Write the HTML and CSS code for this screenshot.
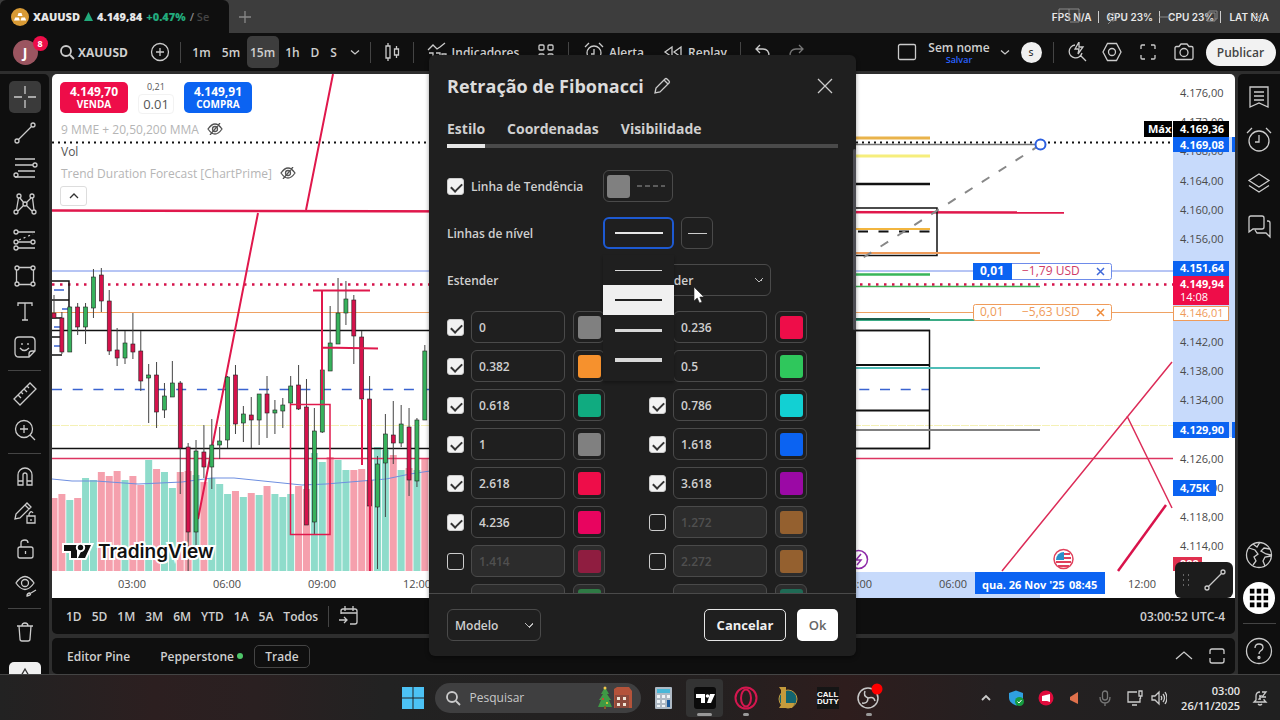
FILE: index.html
```html
<!DOCTYPE html>
<html lang="pt-BR">
<head>
    <meta charset="UTF-8">
    <meta name="viewport" content="width=device-width, initial-scale=1.0">
    <title>XAUUSD 4.149,84 +0.47%</title>
    <link rel="stylesheet" href="styles.css">
</head>
<body>
    <header class="tabstrip">
        <div class="tab">
            <svg class="gold" viewBox="0 0 18 18"><circle cx="9" cy="9" r="9" fill="#d89a35"/><path d="M6.500 8l1-3h3l1 3zM3 12.500l1.200-3h3.600l1 3zM9.500 12.500l1-3h3.500l1.200 3z" fill="#fff"/></svg>
            <strong>XAUUSD</strong>
            <svg class="up" viewBox="0 0 8 8"><path d="M4 0l4 8H0z" fill="#22ab7c"/></svg>
            <strong>4.149,84</strong>
            <strong class="gain">+0.47%</strong>
            <span class="tab-rest">/ <span>Se</span></span>
        </div>
        <button class="new-tab" aria-label="Nova aba"><svg class="ic" viewBox="0 0 14 14"><path d="M7 1v12M1 7h12"/></svg></button>
        <div class="stats">
            <span>FPS N/A</span><span>GPU 23%</span><span>CPU 23%</span><span>LAT N/A</span>
            <svg class="window-icons" viewBox="0 0 214 20"><path d="M3 5V2h20v13h-9M13 2v12M3 5v4M55 14l-3 3M103 10h12M151 6h8v8h-8zM153 6V4h8v8h-2M197 5l10 10M207 5l-10 10"/><circle cx="57" cy="10" r="4"/></svg>
        </div>
    </header>

    <nav class="topbar">
        <div class="tools-left">
            <div class="avatar">J<span class="badge">8</span></div>
            <button class="symbol"><svg class="ic bold" viewBox="0 0 16 16"><circle cx="7" cy="7" r="5"/><path d="M11 11l4 4"/></svg>XAUUSD</button>
            <button aria-label="Comparar"><svg class="ic" viewBox="0 0 20 20"><circle cx="10" cy="10" r="8.500"/><path d="M10 6v8M6 10h8"/></svg></button>
            <i></i>
            <button>1m</button>
            <button>5m</button>
            <button class="on">15m</button>
            <button>1h</button>
            <button>D</button>
            <button>S</button>
            <button aria-label="Mais intervalos"><svg class="ic tiny" viewBox="0 0 10 10"><path d="M1 3.500l4 3.500 4-3.500"/></svg></button>
            <i></i>
            <button aria-label="Velas"><svg class="ic" viewBox="0 0 20 20"><path d="M4 4h4v12H4zM6 1v3M6 16v3M12.500 7h4v6h-4zM14.500 4v3M14.500 13v3"/></svg></button>
            <i></i>
            <button><svg class="ic" viewBox="0 0 20 20"><path d="M1 8l5-5 4 4 3-2 5-4M2 11h4v7M9 11h4v7M15 18v-6h4v6"/></svg>Indicadores</button>
            <button aria-label="Modelos"><svg class="ic" viewBox="0 0 20 20"><rect x="3" y="3" width="5" height="5" rx="1"/><rect x="12" y="3" width="5" height="5" rx="1"/><rect x="3" y="12" width="5" height="5" rx="1"/><rect x="12" y="12" width="5" height="5" rx="1"/></svg></button>
            <i></i>
            <button><svg class="ic" viewBox="0 0 20 20"><circle cx="10" cy="11" r="7"/><path d="M10 7v5H7M1 5l4-4M19 5l-4-4"/></svg>Alerta</button>
            <button><svg class="ic" viewBox="0 0 20 20"><path d="M9 5v10l-7-5zM18 5v10l-7-5z"/></svg>Replay</button>
            <i></i>
            <button aria-label="Desfazer"><svg class="ic" viewBox="0 0 20 20"><path d="M8 3L4 7l4 4M4 7h7q6 0 6 7"/></svg></button>
            <button aria-label="Refazer"><svg class="ic dim" viewBox="0 0 20 20"><path d="M12 3l4 4-4 4M16 7H9q-6 0-6 7"/></svg></button>
        </div>
        <div class="tools-right">
            <button aria-label="Layout"><svg class="ic" viewBox="0 0 20 20"><rect x="1.500" y="2.500" width="17" height="15" rx="1.500"/></svg></button>
            <button class="layout-name">Sem nome<small>Salvar</small></button>
            <button aria-label="Layouts"><svg class="ic tiny" viewBox="0 0 10 10"><path d="M1 3.500l4 3.500 4-3.500"/></svg></button>
            <span class="user-s">S</span>
            <i></i>
            <button aria-label="Busca rápida"><svg class="ic" viewBox="0 0 20 20"><path d="M8 3a6.500 6.500 0 1 0 7 8M13 13l6 6M12 0l-4 7h4l-1 5 5-7h-4z"/></svg></button>
            <button aria-label="Configurações"><svg class="ic" viewBox="0 0 20 20"><path d="M5.500 1.500h9L19 10l-4.500 8.500h-9L1 10z"/><circle cx="10" cy="10" r="3.500"/></svg></button>
            <button aria-label="Tela cheia"><svg class="ic" viewBox="0 0 20 20"><path d="M3 7V4q0-1 1-1h3M13 3h3q1 0 1 1v3M17 13v3q0 1-1 1h-3M7 17H4q-1 0-1-1v-3"/></svg></button>
            <button aria-label="Foto"><svg class="ic" viewBox="0 0 20 20"><path d="M1 6q0-1.500 1.500-1.500H5L7 2h6l2 2.500h2.500Q19 4.500 19 6v10q0 1.500-1.500 1.500h-15Q1 17.500 1 16z"/><circle cx="10" cy="10.500" r="4"/></svg></button>
            <button class="publish">Publicar</button>
        </div>
    </nav>

    <main class="workspace">
        <aside class="rail rail-left">
            <div class="group group-draw">
                <button class="on" aria-label="Cursor"><svg class="ic" viewBox="0 0 28 28"><path d="M14 3v8M14 17v8M3 14h8M17 14h8"/></svg></button>
                <button aria-label="Linha"><svg class="ic" viewBox="0 0 28 28"><circle cx="6" cy="22" r="2"/><circle cx="22" cy="6" r="2"/><path d="M7.500 20.500l13-13"/></svg></button>
                <button aria-label="Fibonacci"><svg class="ic" viewBox="0 0 28 28"><path d="M4 5h20M4 11h18M7 17h17M4 23h20"/><circle cx="24" cy="11" r="2"/><circle cx="5" cy="21" r="2"/></svg></button>
                <button aria-label="Padrões"><svg class="ic" viewBox="0 0 28 28"><circle cx="8" cy="6" r="2"/><circle cx="21" cy="6" r="2"/><circle cx="14" cy="14" r="2"/><circle cx="5" cy="22" r="2"/><circle cx="23" cy="22" r="2"/><path d="M7.500 8L5.500 20M9 8l4 5M20 8l-5 5M21.500 8l1.500 12M7 21l6-6M15 15l6 6"/></svg></button>
                <button aria-label="Projeção"><svg class="ic" viewBox="0 0 28 28"><circle cx="5" cy="6" r="2"/><circle cx="5" cy="16" r="2"/><circle cx="22" cy="16" r="2"/><circle cx="5" cy="22" r="2"/><path d="M7 6h17M7 16h13M7 22h17"/><path d="M8 14L22 8" stroke-dasharray="2 3"/></svg></button>
                <button aria-label="Formas"><svg class="ic" viewBox="0 0 28 28"><circle cx="6" cy="6" r="2"/><circle cx="22" cy="6" r="2"/><circle cx="6" cy="22" r="2"/><circle cx="22" cy="22" r="2"/><path d="M8 5.500h12M8 22.500h12M5.500 8v12M22.500 8v12"/></svg></button>
                <button aria-label="Texto"><svg class="ic" viewBox="0 0 28 28"><path d="M7 9V6h14v3M14 6v17M11 23h6"/></svg></button>
                <button aria-label="Ícones"><svg class="ic" viewBox="0 0 28 28"><path d="M8 4h12q4 0 4 4v10l-6 6H8q-4 0-4-4V8q0-4 4-4zM24 18h-3q-3 0-3 3v3M9 15q4 5 9 0M11 10v2M17 10v2"/></svg></button>
            </div>
            <hr>
            <div class="group group-measure">
                <button aria-label="Régua"><svg class="ic" viewBox="0 0 28 28"><path d="M3 19L19 3l6 6L9 25zM7 15l3 3M10 12l2 2M13 9l3 3M16 6l2 2"/></svg></button>
                <button aria-label="Zoom"><svg class="ic" viewBox="0 0 28 28"><circle cx="13" cy="13" r="8.500"/><path d="M19 19l5 5M13 9v8M9 13h8"/></svg></button>
            </div>
            <hr>
            <div class="group group-lock">
                <button aria-label="Ímã"><svg class="ic" viewBox="0 0 28 28"><path d="M7 22V12a7 7 0 0 1 14 0v10h-5V12a2 2 0 0 0-4 0v10zM7 18h5M16 18h5"/></svg></button>
                <button aria-label="Manter desenho"><svg class="ic" viewBox="0 0 28 28"><path d="M4 20l1-5L16 4l4 4L9 19zM14 6l4 4M16 17h8v7h-8zM18 17v-2q2-4 4-1M20 20v2"/></svg></button>
                <button aria-label="Travar"><svg class="ic" viewBox="0 0 28 28"><rect x="7" y="12" width="15" height="11" rx="2"/><path d="M10 12V8q0-3 4-3 3 0 3 3M14.500 16v3"/></svg></button>
                <button aria-label="Ocultar"><svg class="ic" viewBox="0 0 28 28"><path d="M5 12q9-13 18 0-9 13-18 0z"/><circle cx="14" cy="12" r="3.500"/><path d="M25 19l-5 3M16 25q0-3 3-3 2 2-3 3z"/></svg></button>
            </div>
            <hr>
            <button aria-label="Excluir"><svg class="ic" viewBox="0 0 28 28"><path d="M6 8h16M11 8q0-3 3-3t3 3M8 8l1 13q0 2 2 2h6q2 0 2-2l1-13"/></svg></button>
            <button class="more" aria-label="Mais"><svg class="ic" viewBox="0 0 28 28"><path d="M14 5l-4 7h8z"/></svg></button>
        </aside>

        <div class="center">
            <section class="chart">
                <svg id="chart" viewBox="52 74 1183 524" preserveAspectRatio="xMinYMin slice">
                    <g class="axis-bands">
                        <rect x="1173" y="137" width="62" height="300"/>
                        <rect x="850" y="572" width="190" height="26"/>
                    </g>
                    <g id="volume"></g>
                    <path d="M52 479l20 2 24 0 42 3 44-2 30-4 22 0 68 7 24-1 36-3 24-2 24-5 40-6" class="ma"/>
                    <g class="lines">
                        <path d="M52 142.500H1173" stroke="#111" stroke-width="2" stroke-dasharray="2 4"/>
                        <path d="M52 210.500l1012 2" stroke="#e0184c" stroke-width="2.500"/>
                        <path d="M52 271H1173" stroke="#6e8bea"/>
                        <path d="M52 284.500H1173" stroke="#d5124b" stroke-width="2.500" stroke-dasharray="2.500 5.500"/>
                        <path d="M52 312.500H1173" stroke="#efa263"/>
                        <path d="M52 330.500H930" stroke="#111" stroke-width="1.500"/>
                        <path d="M52 389.500H930" stroke="#3a63d0" stroke-width="1.500" stroke-dasharray="10 10.700"/>
                        <path d="M52 425.500H1173" stroke="#f5f1b5" stroke-dasharray="8 1"/>
                        <path d="M52 448.500H930" stroke="#111" stroke-width="1.500"/>
                        <path d="M52 458.500H1173" stroke="#dc3460" stroke-width="1.500"/>
                        <path d="M333 74l-27 136M258 213L198 519" stroke="#e0184c" stroke-width="2"/>
                    </g>
                    <g fill="none" stroke="#111" stroke-width="1.500">
                        <path d="M52 281h17v50M52 300h17M52 318h10M52 337h10M52 355h10"/>
                        <path d="M54 290h10M62 309h6M54 327h7M54 346h7" stroke="#3a63d0"/>
                    </g>
                    <g id="candles"></g>
                    <g fill="none" stroke="#e0184c" stroke-width="2">
                        <path d="M313 290.500h57M322 290v110M322 347.500l56 1M362 400v65M370 400v171"/>
                        <rect x="290.500" y="404.500" width="39.500" height="130" stroke-width="1.500"/>
                    </g>
                    <g fill="none" stroke-width="2">
                        <path d="M850 138h80" stroke="#e9b34b" stroke-width="3"/>
                        <path d="M850 144.500h190" stroke="#777" stroke-width="1.500"/>
                        <path d="M850 156h80" stroke="#f6ee7c" stroke-width="3"/>
                        <path d="M850 184h80" stroke="#111" stroke-width="2.500"/>
                        <path d="M850 208h87v47.500h-87" stroke="#111" stroke-width="1.500"/>
                        <path d="M850 229h80" stroke="#f2b53f"/>
                        <path d="M858 231.500h72" stroke="#111" stroke-dasharray="10 10.500"/>
                        <path d="M850 253h190" stroke="#ef9b5a"/>
                        <path d="M850 274.500h80" stroke="#38b558" stroke-width="2.500"/>
                        <path d="M850 286.500h190" stroke="#3fae55" stroke-width="1.500"/>
                        <path d="M850 320h190" stroke="#3aab85"/>
                        <path d="M850 319h80" stroke="#1c5d4b"/>
                        <path d="M850 330.500h79.500v118H850" stroke="#111" stroke-width="1.500"/>
                        <path d="M850 365h80M850 410.500h80" stroke="#111"/>
                        <path d="M850 368h190" stroke="#4fbdb7"/>
                        <path d="M850 430h190" stroke="#808080"/>
                        <path d="M1040 145L850 266" stroke="#888" stroke-dasharray="9 11"/>
                        <path d="M1172 362l-170 209M1127 416l45 92" stroke="#dc2c58" stroke-width="1.500"/>
                        <path d="M1166 505l-48 66" stroke="#d9134b" stroke-width="2.500"/>
                        <circle cx="1040.500" cy="144.500" r="5" fill="#fff" stroke="#2b5fe0"/>
                    </g>
                    <g class="order">
                        <rect x="973.500" y="263.500" width="138" height="16" rx="2" fill="#fff" stroke="#6e8bea"/>
                        <path d="M973 263h39v17h-39z" fill="#0b63f2"/>
                        <text x="980" y="275" fill="#fff" font-weight="700">0,01</text>
                        <text x="1022" y="275" fill="#cf3a67">−1,79 USD</text>
                        <path d="M1097 268l7 7M1104 268l-7 7" stroke="#3f68d8" stroke-width="1.500"/>
                        <rect x="973.500" y="304.500" width="138" height="16" rx="2" fill="#fff" stroke="#ef9b5a"/>
                        <text x="980" y="316" fill="#ef9b5a">0,01</text>
                        <text x="1022" y="316" fill="#ef9b5a">−5,63 USD</text>
                        <path d="M1097 309l7 7M1104 309l-7 7" stroke="#ef8b3a" stroke-width="1.500"/>
                    </g>
                    <g class="prices" id="prices"></g>
                    <g class="tags">
                        <path d="M1144 121h28v16h-28z" fill="#000"/><text x="1148" y="133">Máx</text>
                        <path d="M1173 121h56v16h-56z" fill="#000"/><text x="1180" y="133">4.169,36</text>
                        <path d="M1173 137h56v15h-56zM1232 137h3v15h-3z" fill="#0b63f2"/><text x="1180" y="149">4.169,08</text>
                        <path d="M1173 261h56v15h-56z" fill="#0b63f2"/><text x="1180" y="272">4.151,64</text>
                        <path d="M1173 276h56v29h-56z" fill="#ee0d49"/><text x="1180" y="288">4.149,94</text><text x="1180" y="301" font-weight="400">14:08</text>
                        <rect x="1173.500" y="306.500" width="55" height="14" fill="#fff" stroke="#ef9b5a"/><text x="1180" y="317" fill="#ef9b5a" font-weight="400">4.146,01</text>
                        <path d="M1173 422h56v16h-56zM1232 422h3v16h-3z" fill="#0b63f2"/><text x="1180" y="434">4.129,90</text>
                        <path d="M1173 480h43v16h-43z" fill="#0b63f2"/><text x="1180" y="492">4,75K</text>
                        <path d="M1173 557h29v14h-29z" fill="#e0304f"/><text x="1180" y="568">888</text>
                    </g>
                    <g class="times">
                        <text x="132" y="588">03:00</text>
                        <text x="227" y="588">06:00</text>
                        <text x="322" y="588">09:00</text>
                        <text x="417" y="588">12:00</text>
                        <text x="858" y="588">03:00</text>
                        <text x="953" y="588">06:00</text>
                        <text x="1142" y="588">12:00</text>
                    </g>
                    <g class="tags">
                        <path d="M975 572h130v22H975z" fill="#0b63f2"/>
                        <text x="982" y="589">qua. 26 Nov '25</text><text x="1069" y="589">08:45</text>
                    </g>
                    <circle cx="858.500" cy="559.500" r="9" fill="#fff" stroke="#8e2ba8" stroke-width="1.500"/>
                    <path d="M861 554l-5 6h5l-4 5" fill="none" stroke="#8e2ba8" stroke-width="1.500"/>
                    <g>
                        <circle cx="1063.500" cy="559" r="9.500" fill="#fff" stroke="#e0405c" stroke-width="1.500"/>
                        <path d="M1063 554h7M1063 558h8M1056 562h15M1058 566h11" stroke="#e0405c" stroke-width="2"/>
                        <path d="M1056 560a8 8 0 0 1 8-8v8z" fill="#2b8fc9"/>
                    </g>
                    <g class="brand">
                        <path d="M64 545h13v13h-6v-7h-7zM84 545h7l-6 13h-7z"/><circle cx="80.500" cy="547.500" r="2.700"/>
                        <text x="98" y="558">TradingView</text>
                    </g>
                </svg>
                <div class="legend">
                    <div class="trade">
                        <button class="sell">4.149,70<span>VENDA</span></button>
                        <div class="spread">0,21<b>0.01</b></div>
                        <button class="buy">4.149,91<span>COMPRA</span></button>
                    </div>
                    <p class="faded">9 MME + 20,50,200 MMA <svg class="ic" viewBox="0 0 16 12"><path d="M1 6q7-10 14 0-7 10-14 0zM3 12L13 0"/><circle cx="8" cy="6" r="2.500"/></svg></p>
                    <p>Vol</p>
                    <p class="faded">Trend Duration Forecast [ChartPrime] <svg class="ic" viewBox="0 0 16 12"><path d="M1 6q7-10 14 0-7 10-14 0zM3 12L13 0"/><circle cx="8" cy="6" r="2.500"/></svg></p>
                    <button class="collapse" aria-label="Recolher"><svg class="ic" viewBox="0 0 10 10"><path d="M1 7l4-4 4 4"/></svg></button>
                </div>
                <div class="float-tool">
                    <svg viewBox="0 0 10 14" class="grip"><path d="M2 2h1M7 2h1M2 7h1M7 7h1M2 12h1M7 12h1"/></svg>
                    <svg class="ic" viewBox="0 0 28 28"><circle cx="6" cy="22" r="2"/><circle cx="22" cy="6" r="2"/><path d="M7.500 20.500l13-13"/></svg>
                </div>
            </section>
            <div class="ranges">
                <button>1D</button><button>5D</button><button>1M</button><button>3M</button><button>6M</button><button>YTD</button><button>1A</button><button>5A</button><button>Todos</button>
                <i></i>
                <button aria-label="Ir para data"><svg class="ic" viewBox="0 0 20 20"><path d="M2 8V5q0-2 2-2h12q2 0 2 2v11q0 2-2 2h-5M2 7h16M6 0v5M14 0v5M0 14h8M5 11l3 3-3 3"/></svg></button>
                <span class="clock">03:00:52 UTC-4</span>
            </div>
            <div class="panels">
                <button>Editor Pine</button>
                <button class="broker">Pepperstone<span></span></button>
                <button class="trade-btn">Trade</button>
                <div class="panel-actions">
                    <button aria-label="Abrir painel"><svg class="ic" viewBox="0 0 20 20"><path d="M2 13l8-7 8 7"/></svg></button>
                    <button aria-label="Maximizar"><svg class="ic" viewBox="0 0 20 20"><path d="M3 8V5q0-2 2-2h10q2 0 2 2v3M17 12v3q0 2-2 2H5q-2 0-2-2v-3"/></svg></button>
                </div>
            </div>
        </div>

        <aside class="rail rail-right">
            <button aria-label="Lista"><svg class="ic" viewBox="0 0 28 28"><path d="M5 4h18v20l-9-4-9 4zM9 9h10M9 13h10M9 17h10"/></svg></button>
            <button aria-label="Alertas"><svg class="ic" viewBox="0 0 28 28"><circle cx="14" cy="15" r="10"/><path d="M14 9v7h-4M2 7l5-5M26 7l-5-5"/></svg></button>
            <button aria-label="Camadas"><svg class="ic" viewBox="0 0 28 28"><path d="M14 5l10 6.500L14 18 4 11.500zM4 16.500L14 23l10-6.500"/></svg></button>
            <button aria-label="Chat"><svg class="ic" viewBox="0 0 28 28"><path d="M6 4h11q2 0 2 2v9q0 2-2 2H8l-4 3V6q0-2 2-2zM22 9h1q2 0 2 2v14l-4-4h-9l-2-3"/></svg></button>
            <button class="globe" aria-label="Mundo"><svg class="ic" viewBox="0 0 28 28"><circle cx="14" cy="14" r="12.500"/><path d="M4 7l6 2 3 4-4 3 2 4-3 4M8 3l4 3 3-5M25 8l-6-1-3 3 5 3 5 1M26 15l-6 1-2 4 2 5"/></svg></button>
            <button class="apps" aria-label="Aplicativos"><svg viewBox="0 0 28 28"><path d="M6 6h4v4H6zM12 6h4v4h-4zM18 6h4v4h-4zM6 12h4v4H6zM12 12h4v4h-4zM18 12h4v4h-4zM6 18h4v4H6zM12 18h4v4h-4zM18 18h4v4h-4z"/></svg></button>
            <hr>
            <button aria-label="Ajuda"><svg class="ic" viewBox="0 0 28 28"><circle cx="14" cy="14" r="12.500"/><path d="M10 11q0-4 4-4t4 3.500q0 2-2.500 3.500-1.500 1-1.500 3"/><circle cx="14" cy="20.500" r="1"/></svg></button>
        </aside>
    </main>

    <footer class="taskbar">
        <div class="apps-row">
            <svg class="app" viewBox="0 0 24 24"><path d="M1 1h10.500v10.500H1zM12.500 1H23v10.500H12.500zM1 12.500h10.500V23H1zM12.500 12.500H23V23H12.500z" fill="#4cc2f5"/></svg>
            <label class="search">
                <svg class="ic bold" viewBox="0 0 16 16"><circle cx="7" cy="7" r="5"/><path d="M11 11l4 4"/></svg>
                <input type="text" placeholder="Pesquisar">
                <svg class="xmas" viewBox="0 0 36 24"><path d="M7 1l4 7H9l4 6h-2l3 7H0l3-7H1l4-6H3z" fill="#3f9a45"/><path d="M6 20h2v3H6z" fill="#8a5a2b"/><circle cx="7" cy="2" r="1.500" fill="#f3c84b"/><circle cx="5" cy="13" r="1" fill="#e33"/><circle cx="9" cy="17" r="1" fill="#fc3"/><path d="M16 3l3-2h12l3 4v17H16z" fill="#b4533a"/><path d="M17 9h14v13H17z" fill="#8b4a3c"/><path d="M19 11h3v3h-3zM25 11h3v3h-3zM19 17h3v3h-3zM25 17h3v3h-3z" fill="#f0e5d5"/></svg>
            </label>
            <svg class="app" viewBox="0 0 24 24"><rect x="4" y="1" width="17" height="22" rx="1" fill="#aeb9c4"/><path d="M6 3h13v4H6z" fill="#49b7d8"/><path d="M6 9h3v3H6zM11 9h3v3h-3zM16 9h3v3h-3zM6 14h3v3H6zM11 14h3v3h-3zM6 19h3v2H6zM11 19h3v2h-3z" fill="#eef3f7"/><path d="M16 14h3v7h-3z" fill="#1b5a9c"/></svg>
            <div class="open current"><svg class="app" viewBox="0 0 24 24"><rect x="1" y="1" width="22" height="22" rx="3" fill="#0b0b0b"/><path d="M3 8h9v9H8v-5H3zM17 8h5l-4 9h-4z" fill="#fff"/><circle cx="14.500" cy="10" r="1.800" fill="#fff"/></svg></div>
            <div class="open"><svg class="app" viewBox="0 0 24 24" fill="none" stroke="#d4174f" stroke-width="2"><circle cx="12" cy="12" r="10.500"/><ellipse cx="12" cy="12" rx="5" ry="8.500"/></svg></div>
            <svg class="app" viewBox="0 0 24 24"><circle cx="13" cy="13" r="9" fill="#126570" stroke="#c59b3c"/><path d="M4 1h7v16h9l-3 5H4l2-3V4z" fill="#c59b3c"/></svg>
            <svg class="app" viewBox="0 0 24 24"><path d="M1 1h22v22H1z" fill="#151515"/><text x="1" y="11" class="cod">CALL</text><text x="1" y="18" class="cod">DUTY</text></svg>
            <div class="open"><svg class="app rec" viewBox="0 0 24 24"><g fill="none" stroke="#c8c8c8" stroke-width="1.500"><circle cx="11" cy="12" r="10"/><path d="M11 12q-5-2-3-7M11 12q6-2 7 3M11 12q0 6-6 5"/></g><circle cx="20" cy="3" r="5.500" fill="#f00"/></svg></div>
        </div>
        <div class="tray">
            <svg class="ic bold" viewBox="0 0 16 16"><path d="M4 10l4-4 4 4"/></svg>
            <svg viewBox="0 0 16 16"><path d="M1 3l7-2.500L15 3v5q0 5-7 7.500Q1 13 1 8z" fill="#2f9fe0"/><circle cx="11.500" cy="11.500" r="4.500" fill="#169b3f"/><path d="M9.500 11.500l1.500 1.500 2.500-3" stroke="#fff" fill="none"/></svg>
            <svg viewBox="0 0 16 16"><circle cx="8" cy="8" r="7.500" fill="#e00b3c"/><path d="M4 6l8-2v8l-3-1H4z" fill="#fff"/></svg>
            <svg viewBox="0 0 16 16"><path d="M3 7l8-5v12L3 10z" fill="#e0714c"/></svg>
            <svg class="ic dim" viewBox="0 0 16 16"><rect x="5.500" y="1" width="5" height="9" rx="2.500"/><path d="M3 7q0 6 5 6t5-6M8 13v3"/></svg>
            <svg class="ic" viewBox="0 0 16 16"><path d="M10 2H1v10h12V8M5 15h5M12 1h3v5h-3zM13.500 6v3"/></svg>
            <svg class="ic" viewBox="0 0 16 16"><path d="M1 6h3l4-4v12l-4-4H1zM10 6q1.500 2 0 4M12 4q3 4 0 8M14 2q4 6 0 12"/></svg>
            <div class="datetime">03:00<br>26/11/2025</div>
            <svg class="ic" viewBox="0 0 16 16"><path d="M8 2Q4 2 4 6v4l-2 2h12l-2-2V9M6 14q2 2 4 0M10 2h4l-4 5h4M7 6h2l-2 3h2"/></svg>
        </div>
    </footer>

    <form class="dialog" onsubmit="return false">
        <header>
            <h1>Retração de Fibonacci</h1>
            <button type="button" aria-label="Renomear"><svg class="ic" viewBox="0 0 18 18"><path d="M2 16l1-5L12 2q1-1 2 0l2 2q1 1 0 2l-9 9zM11 3l4 4"/></svg></button>
            <button type="button" class="close" aria-label="Fechar"><svg class="ic" viewBox="0 0 18 18"><path d="M2 2l14 14M16 2L2 16"/></svg></button>
        </header>
        <div class="tabs">
            <button type="button" class="on">Estilo</button><button type="button">Coordenadas</button><button type="button">Visibilidade</button>
        </div>
        <div class="body">
            <div class="row">
                <label class="name"><input type="checkbox" checked>Linha de Tendência</label>
                <button type="button" class="line-style" aria-label="Estilo da linha"><span class="sw gray"></span><svg viewBox="0 0 28 2"><path d="M0 1h28"/></svg></button>
            </div>
            <div class="row">
                <span class="name">Linhas de nível</span>
                <div class="width-wrap">
                    <button type="button" class="width-btn" aria-label="Espessura"><span></span></button>
                    <div class="menu">
                        <button type="button" aria-label="1px"><span class="w1"></span></button>
                        <button type="button" class="on" aria-label="2px"><span class="w2"></span></button>
                        <button type="button" aria-label="3px"><span class="w3"></span></button>
                        <button type="button" aria-label="4px"><span class="w4"></span></button>
                    </div>
                </div>
                <button type="button" class="dash-btn" aria-label="Tipo de linha"><span></span></button>
            </div>
            <div class="row">
                <label class="name" for="extend">Estender</label>
                <select id="extend"><option>Não estender</option></select>
            </div>
            <div class="levels">
                <div class="level"><input type="checkbox" aria-label="Nível 0" checked><input type="text" aria-label="Valor" value="0"><button type="button" aria-label="Cor"><span class="sw gray"></span></button></div>
                <div class="level"><input type="checkbox" aria-label="Nível 0.236" checked><input type="text" aria-label="Valor" value="0.236"><button type="button" aria-label="Cor"><span class="sw red"></span></button></div>
                <div class="level"><input type="checkbox" aria-label="Nível 0.382" checked><input type="text" aria-label="Valor" value="0.382"><button type="button" aria-label="Cor"><span class="sw orange"></span></button></div>
                <div class="level"><input type="checkbox" aria-label="Nível 0.5" checked><input type="text" aria-label="Valor" value="0.5"><button type="button" aria-label="Cor"><span class="sw green"></span></button></div>
                <div class="level"><input type="checkbox" aria-label="Nível 0.618" checked><input type="text" aria-label="Valor" value="0.618"><button type="button" aria-label="Cor"><span class="sw teal"></span></button></div>
                <div class="level"><input type="checkbox" aria-label="Nível 0.786" checked><input type="text" aria-label="Valor" value="0.786"><button type="button" aria-label="Cor"><span class="sw cyan"></span></button></div>
                <div class="level"><input type="checkbox" aria-label="Nível 1" checked><input type="text" aria-label="Valor" value="1"><button type="button" aria-label="Cor"><span class="sw gray"></span></button></div>
                <div class="level"><input type="checkbox" aria-label="Nível 1.618" checked><input type="text" aria-label="Valor" value="1.618"><button type="button" aria-label="Cor"><span class="sw blue"></span></button></div>
                <div class="level"><input type="checkbox" aria-label="Nível 2.618" checked><input type="text" aria-label="Valor" value="2.618"><button type="button" aria-label="Cor"><span class="sw red"></span></button></div>
                <div class="level"><input type="checkbox" aria-label="Nível 3.618" checked><input type="text" aria-label="Valor" value="3.618"><button type="button" aria-label="Cor"><span class="sw purple"></span></button></div>
                <div class="level"><input type="checkbox" aria-label="Nível 4.236" checked><input type="text" aria-label="Valor" value="4.236"><button type="button" aria-label="Cor"><span class="sw pink"></span></button></div>
                <div class="level"><input type="checkbox" aria-label="Nível 1.272"><input type="text" aria-label="Valor" value="1.272" disabled><button type="button" aria-label="Cor" disabled><span class="sw brown"></span></button></div>
                <div class="level"><input type="checkbox" aria-label="Nível 1.414"><input type="text" aria-label="Valor" value="1.414" disabled><button type="button" aria-label="Cor" disabled><span class="sw wine"></span></button></div>
                <div class="level"><input type="checkbox" aria-label="Nível 2.272"><input type="text" aria-label="Valor" value="2.272" disabled><button type="button" aria-label="Cor" disabled><span class="sw brown"></span></button></div>
                <div class="level next"><input type="text" aria-label="Valor" disabled><button type="button" aria-label="Cor" disabled><span class="sw moss"></span></button></div>
                <div class="level next"><input type="text" aria-label="Valor" disabled><button type="button" aria-label="Cor" disabled><span class="sw pine"></span></button></div>
            </div>
        </div>
        <footer>
            <select aria-label="Modelo"><option>Modelo</option></select>
            <button type="button" class="cancel">Cancelar</button>
            <button type="submit" class="ok">Ok</button>
        </footer>
    </form>
    <svg class="pointer" viewBox="0 0 12 18"><path d="M1 1v14l3.200-3 2.300 5 2.500-1-2.200-5H11z" fill="#fff" stroke="#222" stroke-width=".6"/></svg>
    <script src="script.js"></script>
</body>
</html>
```
FILE: styles.css
```css
* {
    box-sizing: border-box;
}
body {
    margin: 0;
    height: 100vh;
    overflow: hidden;
    display: flex;
    flex-direction: column;
    background: #2e2e2e;
    color: #cfcfcf;
    font-family: "Open Sans", "Noto Sans", sans-serif;
    font-size: 12px;
    font-weight: 600;
}
button, input, select {
    font: inherit;
    color: inherit;
}
button {
    display: inline-flex;
    align-items: center;
    justify-content: center;
    background: none;
    border: none;
    padding: 0;
    white-space: nowrap;
}
.ic {
    width: 20px;
    height: 20px;
    flex: none;
    fill: none;
    stroke: #cbcbcb;
    stroke-width: 1.3;
}
.ic.bold {
    width: 16px;
    height: 16px;
    stroke-width: 1.8;
}
.ic.tiny {
    width: 10px;
    height: 10px;
}
.ic.dim {
    stroke: #777;
}

/* browser tabs */
.tabstrip {
    display: flex;
    height: 33px;
    background: #3d3d3d;
}
.tab {
    width: 229px;
    display: flex;
    align-items: center;
    gap: 4px;
    padding-left: 11px;
    background: #0f0f0f;
    border-radius: 6px 6px 0 0;
    color: #e6e6e6;
    font-size: 11px;
    overflow: hidden;
    white-space: nowrap;
}
.gold {
    width: 18px;
    height: 18px;
}
.up {
    width: 9px;
    height: 9px;
}
.gain {
    color: #22ab7c;
}
.tab-rest {
    color: #888;
}
.tab-rest span {
    color: #444;
}
.new-tab {
    width: 32px;
}
.new-tab .ic {
    width: 14px;
    height: 14px;
    stroke: #888;
}
.stats {
    position: relative;
    display: flex;
    align-items: center;
    margin-left: auto;
    padding-right: 11px;
    font-family: Inter, sans-serif;
    font-size: 10px;
    color: #e8e8e8;
}
.stats span + span {
    margin-left: 6px;
    padding-left: 8px;
    border-left: 1px solid #ccc;
}
.window-icons {
    position: absolute;
    top: 7px;
    right: 10px;
    width: 214px;
    height: 20px;
    fill: none;
    stroke: #8a8a8a;
}

/* toolbar */
.topbar {
    display: flex;
    justify-content: space-between;
    height: 38px;
    background: #0f0f0f;
}
.tools-left, .tools-right {
    display: grid;
    align-items: center;
    justify-items: center;
}
.tools-left {
    grid-template-columns: 50px 95px 29px 13px 29px 30px 33px 27px 18px 19px 23px 8px 35px 8px 112px 34px 10px 82px 80px 10px 34px 36px;
}
.tools-right {
    grid-template-columns: 35px 70px 22px 30px 14px 34px 36px 36px 35px 79px;
}
.topbar i {
    width: 1px;
    height: 21px;
    background: #444;
}
.tools-left button {
    height: 32px;
    gap: 5px;
}
.tools-left .on {
    width: 32px;
    border-radius: 5px;
    background: #3d3d3d;
}
.avatar {
    position: relative;
    width: 25px;
    height: 25px;
    border-radius: 50%;
    background: #9b5560;
    color: #fff;
    font-size: 14px;
    font-weight: 700;
    line-height: 25px;
    text-align: center;
}
.badge {
    position: absolute;
    top: -4px;
    right: -10px;
    width: 15px;
    height: 15px;
    border-radius: 50%;
    background: #ee0d49;
    font-size: 9px;
    line-height: 15px;
}
.tools-left .symbol {
    justify-self: start;
    gap: 3px;
    margin-left: 9px;
    font-weight: 700;
}
.layout-name {
    flex-direction: column;
    line-height: 14px;
}
.layout-name small {
    font-size: 9px;
    line-height: 9px;
    color: #2962ff;
}
.user-s {
    width: 21px;
    height: 21px;
    border-radius: 50%;
    background: #f0f0f0;
    color: #333;
    font-size: 9px;
    line-height: 21px;
    text-align: center;
}
.publish {
    width: 70px;
    height: 27px;
    border-radius: 14px;
    background: #f2f2f2;
    color: #444;
}

/* workspace */
.workspace {
    flex: 1;
    min-height: 0;
    display: grid;
    grid-template-columns: 49px minmax(0, 1fr) 42px;
    gap: 3px;
    padding-top: 3px;
}
.rail {
    display: flex;
    flex-direction: column;
    align-items: center;
    min-height: 0;
    overflow: hidden;
    background: #0f0f0f;
}
.rail button {
    flex: none;
    width: 32px;
    height: 32px;
    border-radius: 5px;
}
.rail .ic {
    width: 28px;
    height: 28px;
}
.rail hr {
    flex: none;
    width: 33px;
    height: 1px;
    margin: 7px 0;
    border: none;
    background: #444;
}
.rail .on {
    background: #3a3a3a;
}
.rail-left {
    padding-top: 7px;
    border-radius: 0 5px 0 0;
}
.group {
    flex: none;
    display: flex;
    flex-direction: column;
    justify-content: space-between;
}
.group-draw {
    height: 282px;
}
.group-measure {
    height: 68px;
}
.group-lock {
    height: 140px;
}
.rail .more {
    margin-top: 14px;
    background: #f0f0f0;
}
.more .ic {
    stroke: #333;
}
.rail-right {
    padding-top: 7px;
    gap: 11px;
    border-radius: 5px 0 0 0;
}
.rail-right hr {
    margin: -2px 0 0;
}
.rail .globe {
    margin-top: auto;
}
.rail .apps {
    border-radius: 50%;
    background: #fff;
}
.rail-right button:last-child {
    margin-bottom: 7px;
}
.center {
    display: flex;
    flex-direction: column;
    min-height: 0;
}
.chart {
    position: relative;
    flex: 1;
    min-height: 0;
    background: #fff;
    border-radius: 5px 5px 0 0;
    overflow: hidden;
}
#chart {
    display: block;
    width: 100%;
    height: 100%;
}
.axis-bands rect {
    fill: #c7dafb;
}
.ma {
    fill: none;
    stroke: #6e8fe0;
}
.lines {
    fill: none;
    stroke-width: 1;
}
.vol-up {
    fill: #8fdccb;
}
.vol-down {
    fill: #f5a0ad;
}
.up-bar {
    fill: #37b25c;
}
.down-bar {
    fill: #d5124b;
}
.up-bar, .down-bar {
    stroke: #222;
    stroke-width: 0.6;
}
.wick {
    stroke: #444;
}
.order {
    font-size: 12px;
    font-weight: 400;
}
.prices, .times {
    fill: #4a4a4a;
    font-size: 11px;
    font-weight: 400;
}
.times {
    text-anchor: middle;
}
.tags {
    fill: #fff;
    font-size: 11px;
    font-weight: 700;
}
.brand {
    fill: #111;
    stroke: #fff;
    stroke-width: 4px;
    paint-order: stroke;
    font: 600 19px Inter, sans-serif;
}
.legend {
    position: absolute;
    top: 8px;
    left: 8px;
    color: #555;
    font-weight: 400;
}
.legend p {
    display: flex;
    align-items: center;
    gap: 8px;
    height: 22px;
    margin: 0;
    padding-left: 1px;
}
.legend .faded {
    color: #b5b5b5;
}
.legend p .ic {
    width: 16px;
    height: 12px;
    stroke: #555;
}
.trade {
    display: flex;
    gap: 10px;
    margin-bottom: 4px;
}
.sell, .buy {
    flex-direction: column;
    width: 68px;
    height: 31px;
    border-radius: 5px;
    color: #fff;
    font-weight: 700;
    line-height: 13px;
}
.sell span, .buy span {
    font-size: 10px;
}
.sell {
    background: #ee0d49;
}
.buy {
    background: #0b63f2;
}
.spread {
    width: 36px;
    font-size: 9px;
    line-height: 9px;
    text-align: center;
}
.spread b {
    display: block;
    margin-top: 3px;
    border: 1px solid #f2f2f2;
    border-radius: 4px;
    font-size: 13px;
    font-weight: 400;
    line-height: 18px;
}
.collapse {
    width: 27px;
    height: 20px;
    margin-top: 2px;
    border: 1px solid #ddd;
    border-radius: 3px;
    background: #fff;
}
.collapse .ic {
    width: 10px;
    height: 10px;
    stroke: #333;
}
.float-tool {
    position: absolute;
    right: 2px;
    bottom: 0;
    display: flex;
    align-items: center;
    gap: 10px;
    width: 58px;
    height: 36px;
    padding-left: 6px;
    border-radius: 6px;
    background: #1c1c1c;
}
.grip {
    width: 10px;
    height: 14px;
    stroke: #666;
    stroke-width: 2;
}
.float-tool .ic {
    width: 28px;
    height: 28px;
}
.ranges, .panels {
    display: flex;
    align-items: center;
    height: 36px;
    background: #0f0f0f;
    border-radius: 0 0 5px 5px;
}
.ranges {
    gap: 10px;
    padding: 0 10px 0 14px;
}
.ranges i {
    width: 1px;
    height: 21px;
    background: #444;
}
.clock {
    margin-left: auto;
}
.panels {
    margin: 4px 0 0;
    padding: 0 8px 0 15px;
    border-radius: 5px;
}
.broker {
    gap: 3px;
    margin-left: 30px;
}
.broker span {
    width: 6px;
    height: 6px;
    border-radius: 50%;
    background: #4fc66a;
}
.trade-btn {
    width: 56px;
    height: 23px;
    margin-left: 11px;
    border: 1px solid #444;
    border-radius: 5px;
}
.panel-actions {
    display: flex;
    gap: 13px;
    margin-left: auto;
}

/* system taskbar */
.taskbar {
    display: grid;
    grid-template-columns: 1fr auto 1fr;
    align-items: center;
    height: 46px;
    border-top: 1px solid #444;
    background: linear-gradient(90deg, #222 0, #2c1f20 12%, #2a2021 20%, #222 30%, #242020 56%, #2e1d1d 66%, #242021 78%, #202020 100%);
}
.apps-row {
    grid-column: 2;
    display: grid;
    grid-template-columns: 43px 207px 43px 41px 41px 41px 41px 41px;
    align-items: center;
    justify-items: center;
}
.app {
    display: block;
    width: 24px;
    height: 24px;
}
.rec {
    overflow: visible;
}
.cod {
    fill: #fff;
    font: 800 8px "Liberation Sans", sans-serif;
}
.search {
    display: flex;
    align-items: center;
    gap: 9px;
    width: 206px;
    height: 30px;
    padding: 0 7px 0 10px;
    border-radius: 15px;
    background: #3f3f40;
}
.search input {
    flex: 1;
    min-width: 0;
    padding: 0;
    border: none;
    background: none;
    font-weight: 400;
}
.search input::placeholder {
    color: #c8c8c8;
}
.xmas {
    width: 36px;
    height: 24px;
}
.open {
    display: flex;
    flex-direction: column;
    align-items: center;
    width: 37px;
    height: 38px;
    padding-top: 7px;
    border-radius: 4px;
}
.open::after {
    content: "";
    width: 6px;
    height: 3px;
    margin-top: 3px;
    border-radius: 2px;
    background: #999;
}
.current {
    background: #333;
}
.current::after {
    width: 15px;
}
.tray {
    grid-column: 3;
    justify-self: end;
    display: grid;
    grid-template-columns: 31px 30px 29px 29px 32px 28px 20px 71px 40px;
    align-items: center;
    justify-items: center;
    padding-right: 6px;
    margin-right: -6px;
}
.tray svg {
    width: 16px;
    height: 16px;
}
.datetime {
    justify-self: end;
    color: #e6e6e6;
    font-size: 11px;
    line-height: 15px;
    text-align: right;
}

/* dialog */
.dialog {
    position: absolute;
    top: 55px;
    left: 429px;
    display: flex;
    flex-direction: column;
    width: 427px;
    height: 601px;
    border-radius: 6px;
    background: #1f1f1f;
    box-shadow: 0 2px 4px rgba(0, 0, 0, 0.4);
}
.dialog header {
    display: flex;
    align-items: center;
    gap: 9px;
    height: 62px;
    padding: 0 22px 0 18px;
}
.dialog h1 {
    margin: 0;
    font-size: 18px;
    font-weight: 700;
    color: #dcdcdc;
}
.dialog header .ic {
    width: 18px;
    height: 18px;
}
.close {
    margin-left: auto;
}
.tabs {
    display: flex;
    gap: 22px;
    height: 31px;
    margin: 0 18px;
    border-bottom: 4px solid #4a4a4a;
    font-size: 14px;
    font-weight: 700;
}
.tabs button {
    height: 31px;
    padding-bottom: 4px;
    border-bottom: 4px solid transparent;
}
.tabs .on {
    border-color: #e6e6e6;
}
.body {
    position: relative;
    flex: 1;
    min-height: 0;
    overflow: hidden;
    padding: 22px 18px 0;
}
.body::after {
    content: "";
    position: absolute;
    top: 1px;
    right: 0;
    width: 3px;
    height: 181px;
    border-radius: 2px;
    background: #4c4c52;
}
.row {
    display: flex;
    align-items: center;
    height: 32px;
    margin-bottom: 15px;
}
.name {
    display: flex;
    align-items: center;
    gap: 7px;
    width: 156px;
    white-space: nowrap;
}
.body input[type="checkbox"] {
    appearance: none;
    flex: none;
    width: 17px;
    height: 17px;
    margin: 0;
    border: 1px solid #ccc;
    border-radius: 3px;
}
.body input[type="checkbox"]:checked {
    background: #f2f2f2;
}
.body input[type="checkbox"]:checked::before {
    content: "";
    display: block;
    width: 9px;
    height: 5px;
    margin: 4px 3px;
    border: solid #333;
    border-width: 0 0 2px 2px;
    transform: rotate(-45deg);
}
.line-style, .dash-btn, .width-btn, .level button, .dialog select, .level input[type="text"] {
    height: 32px;
    border: 1px solid #4a4a4a;
    border-radius: 6px;
    background-color: transparent;
}
.line-style {
    width: 70px;
    gap: 7px;
    padding-right: 4px;
}
.line-style svg {
    width: 28px;
    height: 2px;
    stroke: #999;
    stroke-width: 1;
    stroke-dasharray: 5 3;
}
.sw {
    width: 23px;
    height: 23px;
    border-radius: 3px;
}
.gray { background: #808080; }
.red { background: #ee0d49; }
.orange { background: #f6912d; }
.green { background: #2fc75c; }
.teal { background: #10ab80; }
.cyan { background: #12d0d3; }
.blue { background: #0b63f2; }
.purple { background: #9b09a5; }
.pink { background: #e8045f; }
.brown { background: #94602f; }
.wine { background: #8f1d40; }
.moss { background: #2f7a45; }
.pine { background: #1f6a55; }
.width-wrap {
    position: relative;
    width: 71px;
    margin-right: 7px;
}
.width-btn {
    width: 71px;
    border: 2px solid #1d59d1;
}
.width-btn span {
    width: 48px;
    height: 2px;
    background: #e6e6e6;
}
.dash-btn {
    width: 32px;
}
.dash-btn span {
    width: 19px;
    height: 1px;
    background: #ccc;
}
.menu {
    position: absolute;
    z-index: 2;
    top: 38px;
    left: 0;
    width: 71px;
    padding-bottom: 6px;
    background: #1f1f1f;
    box-shadow: 0 2px 3px rgba(0, 0, 0, 0.3);
}
.menu button {
    display: flex;
    width: 71px;
    height: 30px;
}
.menu span {
    width: 47px;
    background: #d8d8d8;
}
.menu .on {
    background: #f0f0f0;
}
.menu .on span {
    background: #222;
}
.menu .w1 { height: 1px; }
.menu .w2 { height: 2px; }
.menu .w3 { height: 3px; }
.menu .w4 { height: 4px; }
.dialog select {
    appearance: none;
    padding: 0 7px;
    background-image: linear-gradient(45deg, transparent 50%, #bbb 50%, #bbb 66%, transparent 66%), linear-gradient(-45deg, transparent 50%, #bbb 50%, #bbb 66%, transparent 66%);
    background-position: right 11px center, right 6px center;
    background-size: 5px 5px;
    background-repeat: no-repeat;
}
#extend {
    width: 168px;
    padding-left: 11px;
}
.levels {
    display: grid;
    grid-template-columns: 202px 158px;
    gap: 7px 0;
}
.level {
    display: flex;
    align-items: center;
    height: 32px;
}
.level input[type="text"] {
    width: 94px;
    margin: 0 8px 0 7px;
    padding: 0 7px;
}
.level input[type="text"]:disabled {
    background: #2c2c2c;
    color: #505050;
}
.level button {
    width: 32px;
}
.level button:disabled {
    background: #2c2c2c;
}
.level.next {
    padding-left: 17px;
}
.dialog footer {
    display: flex;
    align-items: center;
    height: 63px;
    padding: 0 18px;
    border-top: 1px solid #4a4a4a;
}
.dialog footer select {
    width: 94px;
}
.cancel, .ok {
    height: 32px;
    border-radius: 5px;
    font-size: 13px;
}
.cancel {
    width: 82px;
    margin-left: auto;
    border: 1px solid #e6e6e6;
    color: #f0f0f0;
    font-weight: 700;
}
.ok {
    width: 41px;
    margin-left: 11px;
    background: #fff;
    color: #666;
}
.pointer {
    position: absolute;
    top: 286px;
    left: 693px;
    width: 12px;
    height: 18px;
}
```
FILE: script.js
```js
// high, body top, body bottom, low, up (1) or down (0), volume top, volume up/down
const bars = [
    [295, 313, 318, 318, 0, 498, 0], [312, 318, 352, 354, 0, 494, 0], [306, 307, 352, 352, 1, 500, 1],
    [303, 307, 327, 335, 0, 498, 0], [303, 307, 327, 344, 1, 478, 1], [269, 277, 308, 318, 1, 480, 1],
    [268, 275, 301, 312, 0, 472, 0], [290, 301, 351, 355, 0, 476, 0], [328, 350, 358, 366, 0, 471, 0],
    [331, 343, 358, 364, 1, 480, 1], [313, 344, 352, 359, 0, 476, 0], [331, 351, 381, 391, 0, 485, 0],
    [364, 375, 378, 423, 1, 460, 1], [362, 375, 412, 428, 0, 469, 0], [383, 396, 410, 418, 1, 472, 1],
    [361, 383, 397, 397, 1, 488, 1], [381, 383, 448, 494, 0, 472, 0], [443, 447, 532, 571, 0, 471, 0],
    [440, 451, 532, 545, 1, 475, 1], [425, 452, 467, 478, 0, 482, 0], [419, 445, 467, 489, 1, 478, 1],
    [427, 441, 445, 459, 1, 484, 1], [376, 377, 440, 448, 1, 494, 1], [365, 375, 424, 434, 0, 491, 0],
    [406, 414, 423, 442, 1, 497, 1], [397, 415, 420, 448, 0, 493, 0], [394, 394, 420, 445, 1, 495, 1],
    [376, 394, 413, 438, 0, 486, 0], [400, 410, 413, 434, 1, 494, 1], [398, 405, 411, 428, 1, 497, 1],
    [376, 386, 403, 404, 1, 494, 1], [365, 385, 409, 410, 0, 486, 0], [379, 407, 525, 525, 0, 489, 0],
    [408, 431, 522, 534, 1, 453, 1], [370, 370, 432, 433, 1, 462, 1], [306, 343, 371, 371, 1, 457, 0],
    [278, 313, 344, 344, 1, 460, 1], [281, 299, 313, 325, 1, 470, 1], [295, 300, 336, 364, 0, 470, 0],
    [331, 337, 399, 465, 0, 469, 0], [376, 399, 506, 523, 0, 480, 0], [456, 464, 507, 569, 1, 447, 1],
    [414, 434, 463, 517, 1, 450, 1], [401, 435, 443, 464, 0, 455, 0], [405, 424, 443, 447, 1, 470, 1],
    [408, 427, 480, 496, 0, 468, 0], [418, 420, 481, 487, 1, 470, 1], [345, 351, 420, 420, 1, 458, 0]
];

let candles = '';
let volume = '';
bars.forEach(([high, top, bottom, low, up, vol, volUp], i) => {
    const x = 54 + i * 7.89;
    volume += `<rect class="${volUp ? 'vol-up' : 'vol-down'}" x="${x - 3.5}" y="${vol}" width="7" height="${571 - vol}"/>`;
    candles += `<path class="wick" d="M${x} ${high}V${low}"/>`;
    candles += `<rect class="${up ? 'up-bar' : 'down-bar'}" x="${x - 2}" y="${top}" width="4" height="${bottom - top}"/>`;
});
document.getElementById('volume').innerHTML = volume;
document.getElementById('candles').innerHTML = candles;

// price scale, the labels near the current price are left out
const scale = [4176, 4172, 4168, 4164, 4160, 4156, 4142, 4138, 4134, 4126, 4122, 4118, 4114];
document.getElementById('prices').innerHTML = scale.map(p => {
    const y = Math.round(97 + (4176 - p) * 7.31);
    const s = String(p);
    return `<text x="1180" y="${y}">${s[0]}.${s.slice(1)},00</text>`;
}).join('');
```
